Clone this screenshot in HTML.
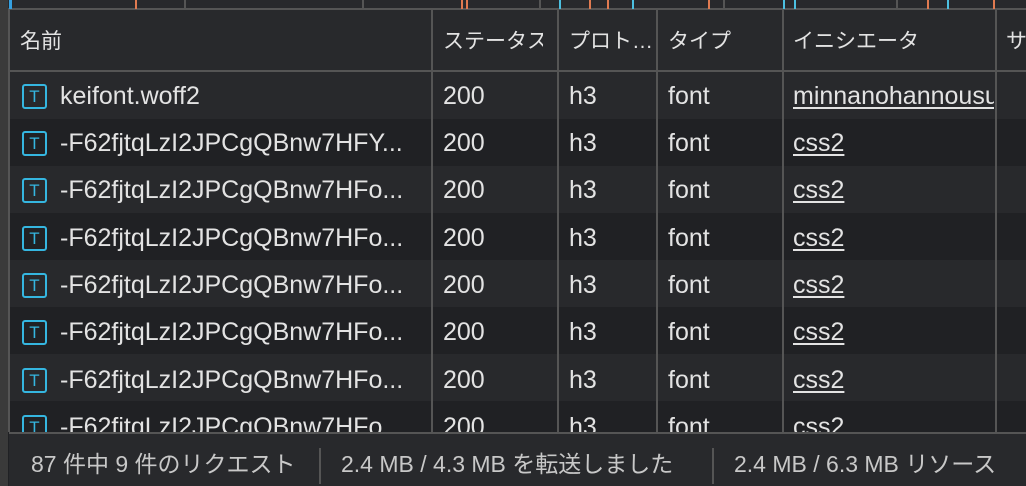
<!DOCTYPE html>
<html><head><meta charset="utf-8"><style>
*{margin:0;padding:0;box-sizing:border-box}
body{width:1026px;height:486px;overflow:hidden;background:#202124;font-family:"Liberation Sans","Noto Sans CJK JP",sans-serif;color:#e3e3e3;font-size:25px;position:relative}
.abs{position:absolute}
.strip{left:0;top:0;width:8px;height:486px;background:#3a3a3a}
.top{left:8px;top:0;width:1018px;height:10px;background:#28292c;border-bottom:2px solid #555}
.tick{position:absolute;top:0;width:2px;height:9px}
.hdr{left:9px;top:10px;width:1017px;height:62px;background:#28292c;border-bottom:2px solid #555}
.row{left:9px;width:1017px;height:47px}
.vl{position:absolute;top:10px;width:2px;height:422px;background:#555}
.t{position:absolute;white-space:nowrap;line-height:1.1}
.j{font-size:21px}
.ic{position:absolute;left:22px;width:25px;height:25px;border:2px solid #35b6e0;border-radius:3px;color:#35b6e0;font-size:17px;text-align:center;line-height:21px}
.u{text-decoration:underline;text-underline-offset:3px;text-decoration-thickness:2px}
.foot{left:9px;top:432px;width:1017px;height:54px;background:#28292c;border-top:2px solid #555}
.sep{position:absolute;top:448px;width:2px;height:36px;background:#555}
.f{color:#c8c8c8;font-size:23px;top:452px}
</style></head><body>
<div class="abs strip"></div>
<div class="abs top">
<div class="tick" style="left:1px;background:#35a0e0;width:3px"></div>
<div class="tick" style="left:127px;background:#e07a50"></div>
<div class="tick" style="left:176px;background:#555"></div>
<div class="tick" style="left:354px;background:#555"></div>
<div class="tick" style="left:453px;background:#e07a50"></div>
<div class="tick" style="left:458px;background:#e07a50"></div>
<div class="tick" style="left:531px;background:#555"></div>
<div class="tick" style="left:551px;background:#4cc0e0"></div>
<div class="tick" style="left:581px;background:#e07a50"></div>
<div class="tick" style="left:599px;background:#e07a50"></div>
<div class="tick" style="left:624px;background:#4cc0e0"></div>
<div class="tick" style="left:700px;background:#e07a50"></div>
<div class="tick" style="left:715px;background:#555"></div>
<div class="tick" style="left:775px;background:#4cc0e0"></div>
<div class="tick" style="left:786px;background:#4cc0e0"></div>
<div class="tick" style="left:888px;background:#555"></div>
<div class="tick" style="left:919px;background:#e07a50"></div>
<div class="tick" style="left:939px;background:#4cc0e0"></div>
<div class="tick" style="left:985px;background:#e07a50"></div>
</div>
<div class="abs hdr"></div>
<div class="abs row" style="top:72px;background:#28292c"></div>
<div class="abs row" style="top:166px;background:#28292c"></div>
<div class="abs row" style="top:260px;background:#28292c"></div>
<div class="abs row" style="top:354px;background:#28292c"></div>
<div class="vl" style="left:8px"></div>
<div class="vl" style="left:431px"></div>
<div class="vl" style="left:557px"></div>
<div class="vl" style="left:656px"></div>
<div class="vl" style="left:782px"></div>
<div class="vl" style="left:995px"></div>
<div class="t j" style="left:20px;top:30px">名前</div>
<div class="t j" style="left:443px;top:30px;width:100px;overflow:hidden">ステータス</div>
<div class="t j" style="left:569px;top:30px">プロト…</div>
<div class="t j" style="left:668px;top:30px">タイプ</div>
<div class="t j" style="left:793px;top:30px">イニシエータ</div>
<div class="t j" style="left:1006px;top:30px">サ</div>

<div class="ic" style="top:84px">T</div>
<div class="t" style="left:60px;top:83px">keifont.woff2</div>
<div class="t" style="left:443px;top:83px">200</div>
<div class="t" style="left:569px;top:83px">h3</div>
<div class="t" style="left:668px;top:83px">font</div>
<div class="t u" style="left:793px;top:83px;width:201px;overflow:hidden;padding-bottom:6px">minnanohannousu</div>

<div class="ic" style="top:131px">T</div>
<div class="t" style="left:60px;top:130px">-F62fjtqLzI2JPCgQBnw7HFY...</div>
<div class="t" style="left:443px;top:130px">200</div><div class="t" style="left:569px;top:130px">h3</div><div class="t" style="left:668px;top:130px">font</div><div class="t u" style="left:793px;top:130px">css2</div>

<div class="ic" style="top:178px">T</div>
<div class="t" style="left:60px;top:177px">-F62fjtqLzI2JPCgQBnw7HFo...</div>
<div class="t" style="left:443px;top:177px">200</div><div class="t" style="left:569px;top:177px">h3</div><div class="t" style="left:668px;top:177px">font</div><div class="t u" style="left:793px;top:177px">css2</div>

<div class="ic" style="top:226px">T</div>
<div class="t" style="left:60px;top:225px">-F62fjtqLzI2JPCgQBnw7HFo...</div>
<div class="t" style="left:443px;top:225px">200</div><div class="t" style="left:569px;top:225px">h3</div><div class="t" style="left:668px;top:225px">font</div><div class="t u" style="left:793px;top:225px">css2</div>

<div class="ic" style="top:273px">T</div>
<div class="t" style="left:60px;top:272px">-F62fjtqLzI2JPCgQBnw7HFo...</div>
<div class="t" style="left:443px;top:272px">200</div><div class="t" style="left:569px;top:272px">h3</div><div class="t" style="left:668px;top:272px">font</div><div class="t u" style="left:793px;top:272px">css2</div>

<div class="ic" style="top:320px">T</div>
<div class="t" style="left:60px;top:319px">-F62fjtqLzI2JPCgQBnw7HFo...</div>
<div class="t" style="left:443px;top:319px">200</div><div class="t" style="left:569px;top:319px">h3</div><div class="t" style="left:668px;top:319px">font</div><div class="t u" style="left:793px;top:319px">css2</div>

<div class="ic" style="top:368px">T</div>
<div class="t" style="left:60px;top:367px">-F62fjtqLzI2JPCgQBnw7HFo...</div>
<div class="t" style="left:443px;top:367px">200</div><div class="t" style="left:569px;top:367px">h3</div><div class="t" style="left:668px;top:367px">font</div><div class="t u" style="left:793px;top:367px">css2</div>

<div class="ic" style="top:415px">T</div>
<div class="t" style="left:60px;top:414px">-F62fjtqLzI2JPCgQBnw7HFo...</div>
<div class="t" style="left:443px;top:414px">200</div><div class="t" style="left:569px;top:414px">h3</div><div class="t" style="left:668px;top:414px">font</div><div class="t" style="left:793px;top:414px">css2</div>

<div class="abs foot"></div>
<div class="t f" style="left:31px">87 件中 9 件のリクエスト</div>
<div class="sep" style="left:319px"></div>
<div class="t f" style="left:341px">2.4 MB / 4.3 MB を転送しました</div>
<div class="sep" style="left:712px"></div>
<div class="t f" style="left:734px">2.4 MB / 6.3 MB リソース</div>
</body></html>
